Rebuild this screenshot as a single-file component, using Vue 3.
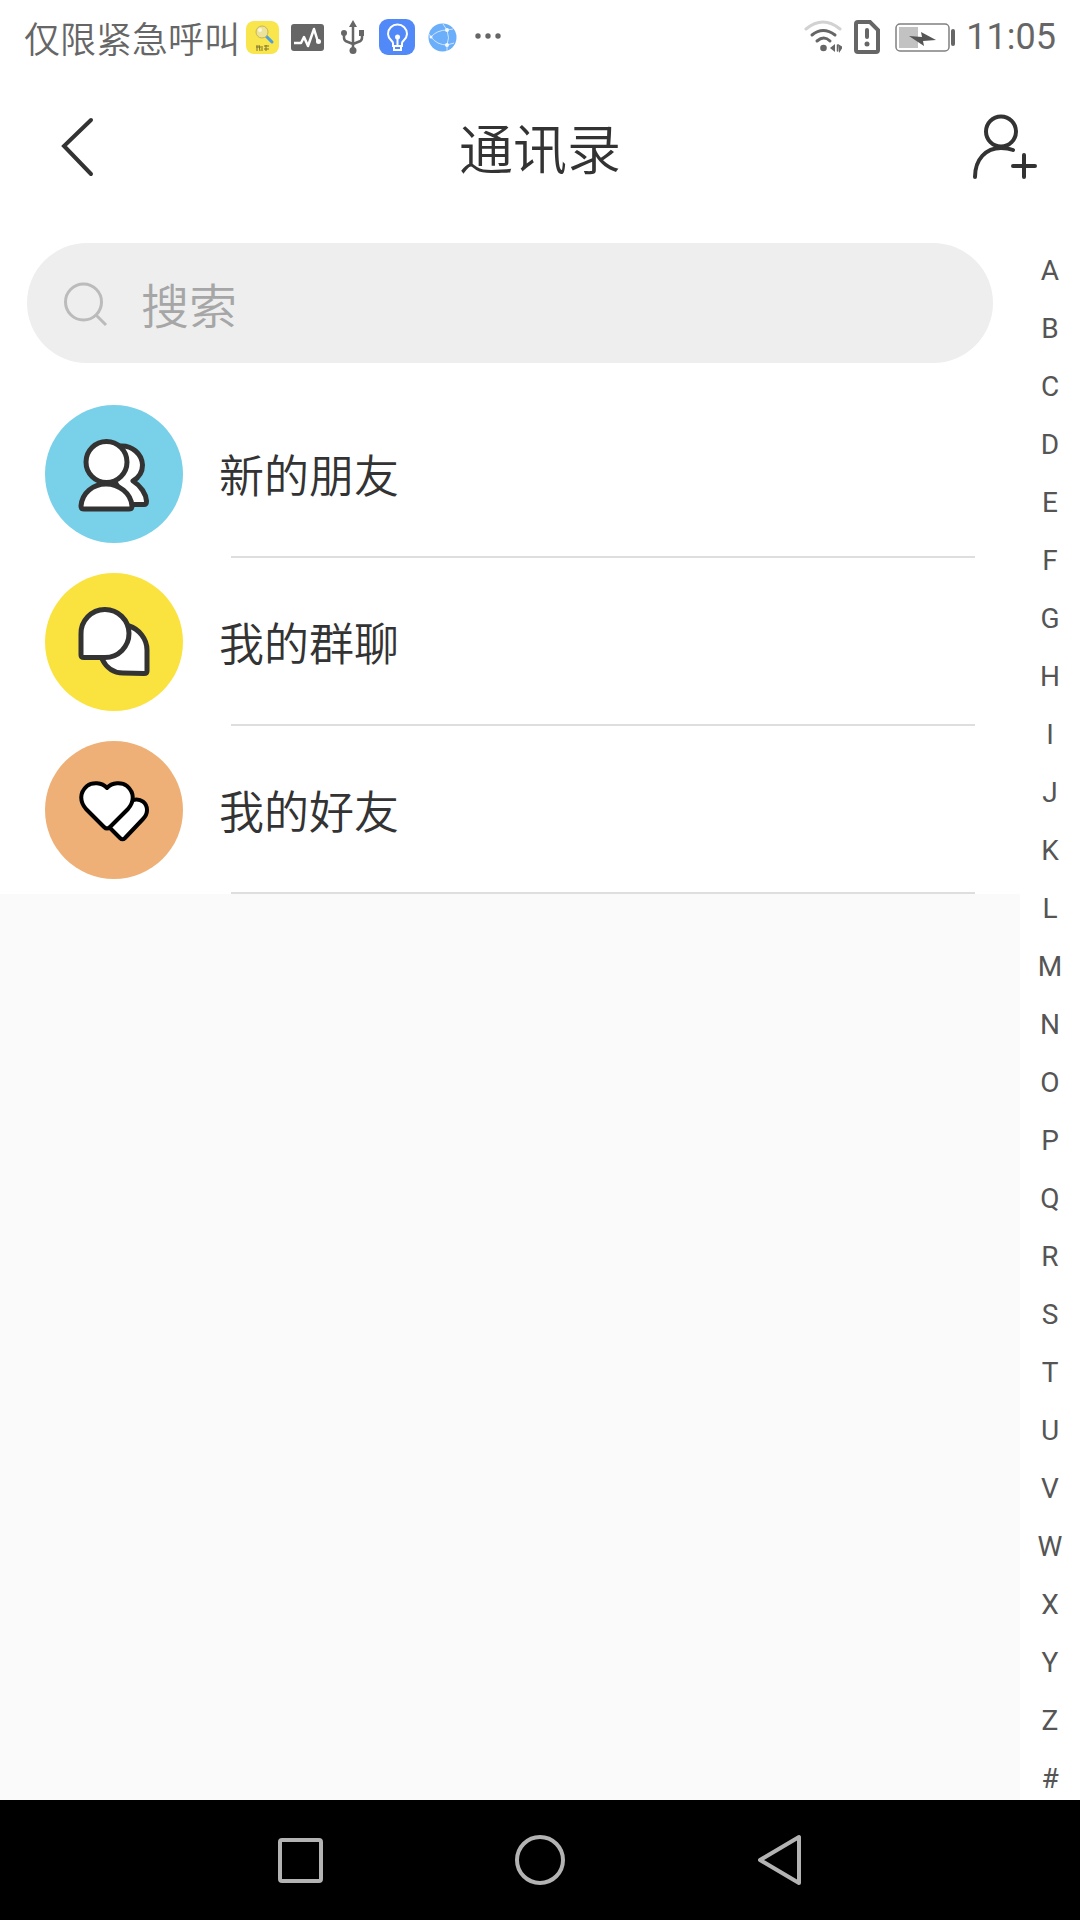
<script setup>
import { ref } from 'vue'

const query = ref('')
const letters = [...'ABCDEFGHIJKLMNOPQRSTUVWXYZ#']
const entries = [
  { id: 'new', label: '新的朋友', color: '#79d0e9' },
  { id: 'groups', label: '我的群聊', color: '#fae33f' },
  { id: 'friends', label: '我的好友', color: '#eeb076' },
]
</script>

<template>
  <div class="page">
    <div class="status">
      <span class="carrier">仅限紧急呼叫</span>
      <div class="notices">
        <svg viewBox="0 0 36 36">
          <rect x="2" y="2" width="33" height="33" rx="8" fill="#f8e64c" />
          <path d="M22 17l6 6" stroke="#4a9fe0" stroke-width="3" stroke-linecap="round" />
          <circle cx="18" cy="13" r="6" fill="#ece39a" stroke="#c9b45a" stroke-width="1" />
          <circle cx="16" cy="11" r="2" fill="#fbf8dc" />
          <path d="M13 26v6M12 28h5M15 26l1 6M18 27v5M20 27h5M20 30h5M22 26v6" stroke="#7d7330" stroke-width="1" fill="none" />
        </svg>
        <svg viewBox="0 0 36 36">
          <rect x="2" y="5" width="33" height="27" rx="3" fill="#666" />
          <path d="M5 24h7l3-6 4 9 6-17 4 13" fill="none" stroke="#fff" stroke-width="2.500" stroke-linejoin="round" />
          <circle cx="29.500" cy="22.500" r="2.500" fill="#fff" />
        </svg>
        <svg viewBox="0 0 36 36" fill="none" stroke="#666" stroke-width="2.500">
          <path d="M19 6v26M10 14v5q0 3 4 4l5 2M28 14v5q0 3-4 4l-5 2" />
          <path d="M19 1l4 7h-8zM25 11h5v6h-5z" fill="#666" stroke="none" />
          <circle cx="10" cy="14" r="3" fill="#666" stroke="none" />
          <circle cx="19" cy="31.500" r="3.500" fill="#666" stroke="none" />
        </svg>
        <svg viewBox="0 0 36 36">
          <rect width="36" height="36" rx="9" fill="#5189f8" />
          <g fill="none" stroke="#fff" stroke-width="2">
            <path d="M14 27v-3c0-2-5-4-5-9a9.500 9.500 0 0 1 19 0c0 5-5 7-5 9v3zM15 28v3h7v-3M18.500 19v8" />
          </g>
          <circle cx="18.500" cy="18" r="2.500" fill="#fff" />
        </svg>
        <svg viewBox="0 0 36 36">
          <circle cx="18.500" cy="18.500" r="14" fill="#6baefa" />
          <g fill="none" stroke="#cfe5ff" stroke-width="1">
            <path d="M7 18Q13 11 23 11M23 11Q26 19 23 26M7 18Q13 26 23 26M23 11l-4-6M23 11l6-1M23 26l7-2M23 26v6M7 18l-2-3" />
          </g>
          <g fill="#f2f8ff"><circle cx="7" cy="18" r="1.500" /><circle cx="23" cy="11" r="2" /><circle cx="23" cy="26" r="2" /></g>
        </svg>
        <svg viewBox="0 0 36 36" fill="#666">
          <circle cx="9" cy="17" r="2.700" /><circle cx="19" cy="17" r="2.700" /><circle cx="29" cy="17" r="2.700" />
        </svg>
      </div>
      <div class="system">
        <svg class="wifi" viewBox="0 0 40 36" fill="none" stroke="#666" stroke-width="3" stroke-linecap="round">
          <path d="M4 10Q21-4 38 10" stroke="#d2d2d2" />
          <path d="M10 16q11-9 23 0M15 22q7-6 13 0" />
          <circle cx="21.500" cy="29" r="3.300" fill="#666" stroke="none" />
          <path d="M28 29l5-4v8zM36 25l5 3-4 6z" fill="#666" stroke="none" />
          <path d="M35.500 26v6" stroke-width="1.500" />
        </svg>
        <svg class="sim" viewBox="0 0 32 36" fill="none" stroke="#666" stroke-width="4">
          <path d="M6 3h12l8 8v20q0 2-2 2H6q-2 0-2-2V5q0-2 2-2z" />
          <path d="M15 11v7" stroke-linecap="round" />
          <circle cx="15" cy="25" r="2.500" fill="#666" stroke="none" />
        </svg>
        <svg class="battery" viewBox="0 0 62 36">
          <rect x="2" y="5" width="53" height="27" rx="4" fill="none" stroke="#808080" stroke-width="1.500" />
          <rect x="5" y="8" width="19" height="21" fill="#c2c2c2" />
          <path d="M15 17l13 1-1-5 15 8-13 1 1 5z" fill="#555" />
          <rect x="57" y="10" width="4" height="17" rx="2" fill="#666" />
        </svg>
        <time>11:05</time>
      </div>
    </div>

    <header class="header">
      <button class="icon-btn" aria-label="返回">
        <svg viewBox="0 0 72 72"><path d="M49 9L22 35l27 28" /></svg>
      </button>
      <h1>通讯录</h1>
      <button class="icon-btn" aria-label="添加好友">
        <svg viewBox="0 0 72 72">
          <circle cx="35" cy="20.500" r="15" />
          <path d="M9 66C9 48 20 37 35 37q7 0 12 2M58 44v22M47 55h22" />
        </svg>
      </button>
    </header>

    <div class="body">
      <main class="panel">
        <div class="content">
          <label class="search">
            <svg viewBox="0 0 48 48"><circle cx="23.500" cy="23" r="18" /><path d="M36 36l10 10" /></svg>
            <input v-model="query" type="text" placeholder="搜索" aria-label="搜索" />
          </label>
          <ul class="entries">
            <li v-for="entry in entries" :key="entry.id">
              <a :href="'#' + entry.id">
                <svg viewBox="0 0 138 138" fill="#fff" stroke="#333" stroke-width="5" stroke-linejoin="round">
                  <circle cx="69" cy="69" r="69" :fill="entry.color" stroke="none" />
                  <template v-if="entry.id === 'new'">
                    <path d="M75 41C87 40 97 49 97.500 60C97.500 68 93 73 88 76C96 81 101 89 101.500 96Q101.500 99.500 99 99.500H84L70 77z" />
                    <path d="M36 101C37 88 48 79 61 79S86 88 87 101Q87 104 84 104H39Q36 104 36 101z" />
                    <circle cx="61.500" cy="57" r="20.500" />
                  </template>
                  <template v-else-if="entry.id === 'groups'">
                    <path d="M84 53C94 56 102 66 102 77V98Q102 100.500 99 100.500L78 100C68 100 61 94 57 86z" />
                    <path d="M36 82V61A24 24 0 1 1 60 84.500L39 84.500Q36 84.500 36 82z" />
                  </template>
                  <template v-else>
                    <path d="M88 59C96 57 102 62 102 69Q102 74 98 78L80 97Q77.500 99.500 75 97L64 86z" stroke="#000" stroke-width="4" />
                    <path d="M62 47C57 41 47 41 42 45C34 52 35 61 41 68L59 86Q62 89 65 86L83 68C89 61 90 52 82 45C77 41 67 41 62 47z" stroke="#000" stroke-width="4" />
                  </template>
                </svg>
                <span>{{ entry.label }}</span>
              </a>
              <hr />
            </li>
          </ul>
        </div>
      </main>
      <nav class="index" aria-label="字母索引">
        <a v-for="letter in letters" :key="letter" :href="'#' + letter">{{ letter }}</a>
      </nav>
    </div>

    <div class="navbar">
      <button aria-label="最近任务"><svg viewBox="0 0 56 56"><rect x="8" y="8" width="41" height="41" rx="2" /></svg></button>
      <button aria-label="主页"><svg viewBox="0 0 56 56"><circle cx="28" cy="28" r="23" /></svg></button>
      <button aria-label="后退"><svg viewBox="0 0 56 56"><path d="M47 5v46L8 28z" /></svg></button>
    </div>
  </div>
</template>

<style>
body {
  margin: 0;
}
</style>

<style scoped>
.page {
  display: flex;
  flex-direction: column;
  min-height: 100vh;
  background: #fff;
  color: #333;
  font-family: "Noto Sans CJK SC", sans-serif;
  font-weight: 350;
}
svg {
  display: block;
  flex: none;
}
button {
  padding: 0;
  border: 0;
  background: none;
}
a {
  color: inherit;
  text-decoration: none;
}
.status {
  display: flex;
  align-items: center;
  height: 72px;
  padding: 2px 24px 0;
  box-sizing: border-box;
  color: #666;
  font-size: 36px;
  line-height: 48px;
}
.notices {
  display: flex;
  gap: 9px;
  margin-left: 4px;
}
.notices svg {
  width: 36px;
  height: 36px;
}
.system {
  display: flex;
  align-items: center;
  gap: 10px;
  margin-left: auto;
}
.system svg {
  height: 36px;
}
.wifi {
  width: 40px;
}
.sim {
  width: 32px;
}
.battery {
  width: 62px;
}
time {
  font-family: Roboto, sans-serif;
  font-weight: 400;
}
.header {
  display: flex;
  align-items: center;
  justify-content: space-between;
  height: 150px;
  padding: 0 42px;
}
.header svg {
  width: 72px;
  height: 72px;
  fill: none;
  stroke: #333;
  stroke-width: 4;
  stroke-linecap: round;
}
h1 {
  margin: 0;
  font-size: 54px;
  font-weight: 350;
  line-height: 72px;
}
.body {
  display: flex;
  flex: 1;
}
.panel {
  flex: 1;
  background: #fafafa;
}
.content {
  padding-top: 21px;
  background: #fff;
}
.search {
  display: flex;
  align-items: center;
  gap: 33px;
  height: 120px;
  margin: 0 27px 27px;
  padding: 0 33px;
  box-sizing: border-box;
  border-radius: 60px;
  background: #eee;
}
.search svg {
  width: 48px;
  height: 48px;
  fill: none;
  stroke: #bbb;
  stroke-width: 3;
}
.search input {
  flex: 1;
  min-width: 0;
  padding: 0;
  border: 0;
  outline: 0;
  background: none;
  color: #333;
  font: inherit;
  font-size: 48px;
  line-height: 72px;
}
.search input::placeholder {
  color: #a6a6a6;
  opacity: 1;
}
.entries {
  margin: 0;
  padding: 0;
  list-style: none;
}
.entries a {
  display: flex;
  align-items: center;
  gap: 36px;
  padding: 15px 45px 13px;
  font-size: 45px;
  line-height: 60px;
}
.entries svg {
  width: 138px;
  height: 138px;
}
.entries hr {
  height: 2px;
  margin: 0 45px 0 231px;
  border: 0;
  background: #dedede;
}
.index {
  display: flex;
  flex-direction: column;
  align-items: center;
  gap: 30px;
  width: 60px;
  padding-top: 35px;
  color: #555;
  font-family: Roboto, sans-serif;
  font-size: 28px;
  font-weight: 400;
  line-height: 28px;
}
.navbar {
  display: flex;
  justify-content: center;
  height: 120px;
  background: #000;
}
.navbar button {
  display: flex;
  align-items: center;
  justify-content: center;
  width: 240px;
}
.navbar svg {
  width: 56px;
  height: 56px;
  fill: none;
  stroke: #b3b3b3;
  stroke-width: 4;
  stroke-linejoin: round;
}
</style>
